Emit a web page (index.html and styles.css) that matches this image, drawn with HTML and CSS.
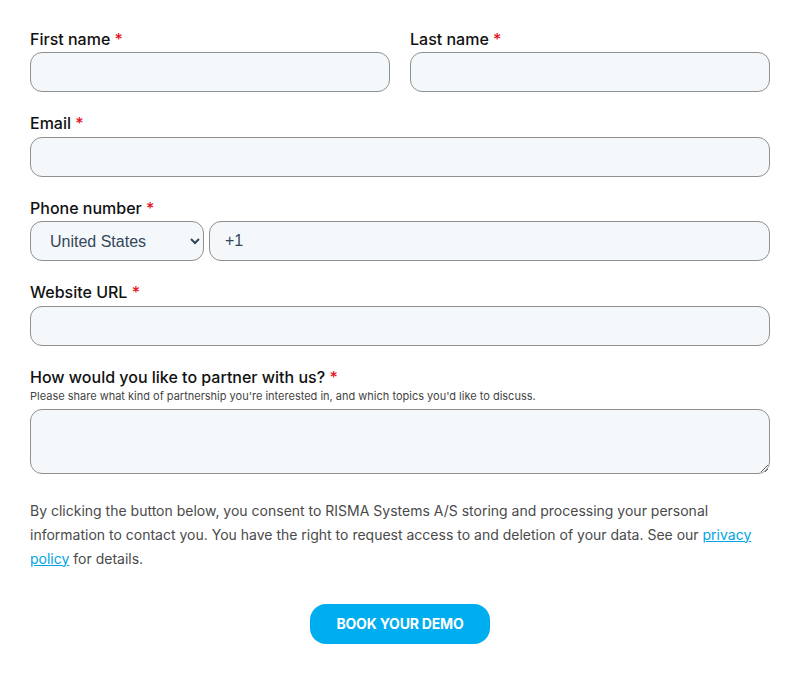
FILE: index.html
```html
<!DOCTYPE html>
<html lang="en">
<head>
  <meta charset="UTF-8" />
  <title>Partner with RISMA</title>
  <meta name="viewport" content="width=device-width, initial-scale=1.0" />
  <link rel="stylesheet" href="styles.css">
</head>
<body>
  <form class="partner-form" onsubmit="return false">
    <div class="row">
      <div class="field">
        <label for="firstname">First name <span class="req">*</span></label>
        <input id="firstname" type="text" />
      </div>
      <div class="field">
        <label for="lastname">Last name <span class="req">*</span></label>
        <input id="lastname" type="text" />
      </div>
    </div>

    <div class="field">
      <label for="email">Email <span class="req">*</span></label>
      <input id="email" type="email" />
    </div>

    <div class="field">
      <label for="phone">Phone number <span class="req">*</span></label>
      <div class="phone-row">
        <select class="country">
          <option>United States</option>
          <option>Denmark</option>
          <option>United Kingdom</option>
        </select>
        <input id="phone" class="phone" type="tel" value="+1" />
      </div>
    </div>

    <div class="field">
      <label for="website">Website URL <span class="req">*</span></label>
      <input id="website" type="url" />
    </div>

    <div class="field">
      <label for="partner">How would you like to partner with us? <span class="req">*</span></label>
      <p class="hint">Please share what kind of partnership you're interested in, and which topics you'd like to discuss.</p>
      <textarea id="partner"></textarea>
    </div>

    <p class="consent">
      By clicking the button below, you consent to RISMA Systems A/S storing and processing your personal
      information to contact you. You have the right to request access to and deletion of your data. See our
      <a href="#">privacy policy</a> for details.
    </p>

    <div class="actions">
      <button type="submit">BOOK YOUR DEMO</button>
    </div>
  </form>
</body>
</html>
```

FILE: styles.css
```css
body { margin: 0; background: #fff; font-family: Inter, "Noto Sans", sans-serif; color: #111; }
.partner-form { padding: 28px 30px 40px; }
.row { display: grid; grid-template-columns: 1fr 1fr; gap: 20px; }
.field { display: flex; flex-direction: column; margin-bottom: 20.67px; }
label { font-size: 16px; line-height: 22px; margin: -0.5px 0 2.5px; font-weight: 500; color: #111; }
.req { color: #e5121d; }
.hint { margin: -3px 0 5px; font-size: 11px; line-height: 16px; color: #444; }

input, select, textarea {
  box-sizing: border-box;
  height: 40px;
  width: 100%;
  background: #f5f8fa;
  border: 1px solid #8f8f8f;
  border-radius: 12px;
  padding: 0 15px;
  font-family: "Liberation Sans", Arial, sans-serif;
  font-size: 16px;
  color: #33475b;
  outline: none;
}
.phone-row { display: flex; gap: 5px; height: 40px; }
.country { width: 174px; flex: none; padding: 0 8px 0 15px; }
.phone { flex: 1; }
textarea { height: 65px; padding: 10px 15px; resize: vertical; }

.consent { margin: 25px 0 0; font-size: 14px; line-height: 24px; color: #4a4a4a; }
.consent a { color: #00a4e4; }
.actions { display: flex; justify-content: center; margin-top: 33px; }
button {
  width: 180px;
  height: 40px;
  background: #00aeef;
  color: #fff;
  border: none;
  border-radius: 16px;
  font-family: Inter, sans-serif;
  font-size: 14px;
  font-weight: 700;
  letter-spacing: -0.2px;
  cursor: pointer;
}
button:hover { background: #0096ce; }
```
